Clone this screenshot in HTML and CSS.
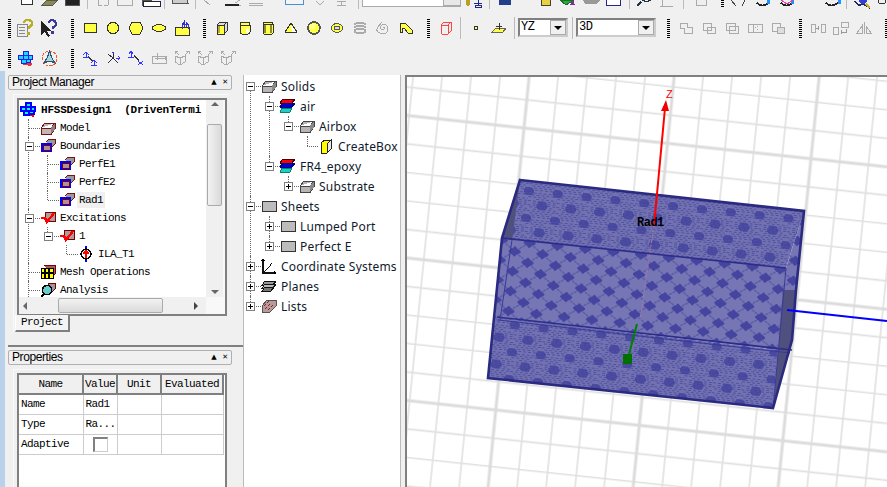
FILE: index.html
```html
<!DOCTYPE html>
<html lang="en">
<head>
    <meta charset="UTF-8">
    <meta name="viewport" content="width=device-width, initial-scale=1.0">
    <title>HFSS</title>
    <link rel="stylesheet" href="styles.css">
</head>
<body>

<!-- shared icons -->
<svg class="defs" width="0" height="0">
    <symbol id="i-solid" viewBox="0 0 16 16"><path d="M1 8h10v6H1zM1 8l4-5h10l-4 5v6l4-5V3" fill="#b8b4b4" stroke="#444"/><path d="M11 8l4-5v6l-4 5z" fill="#888"/></symbol>
    <symbol id="i-model" viewBox="0 0 16 16"><path d="M1 8h10v6H1zM1 8l4-5h10l-4 5v6l4-5V3" fill="#c0b8b8" stroke="#7a1010"/><path d="M11 8l4-5v6l-4 5z" fill="#8a8080"/></symbol>
    <symbol id="i-bound" viewBox="0 0 16 16"><path d="M6 4l3-3h6v5l-3 3" fill="#999" stroke="#7a1010"/><rect x="1" y="5" width="11" height="9" fill="#00f"/><rect x="3" y="7" width="7" height="5" fill="#b09090" stroke="#800000"/></symbol>
    <symbol id="i-exc" viewBox="0 0 16 16"><path d="M5 2h10v9H5z" fill="#b09a9a" stroke="#700"/><path d="M1 8h4l2 4 7-9" fill="none" stroke="#f00" stroke-width="2.4"/></symbol>
    <symbol id="i-port" viewBox="0 0 16 16"><path d="M8 0v16" stroke="#00f" stroke-width="2"/><circle cx="8" cy="8" r="5" fill="#fff" stroke="#000" stroke-width="1.4"/><path d="M8 12V6M5 8l3-3 3 3" stroke="#f00" stroke-width="2" fill="none"/></symbol>
    <symbol id="i-mesh" viewBox="0 0 16 16"><path d="M4 1h11v9l-3 3" fill="#a06060" stroke="#700"/><rect x="1" y="4" width="12" height="10" fill="#ff0" stroke="#000"/><path d="M1 9h12M5 4v10M9 4v10" stroke="#000" stroke-width="1.5"/></symbol>
    <symbol id="i-analysis" viewBox="0 0 16 16"><path d="M8 1h7v6l-4 4z" fill="#999" stroke="#700"/><circle cx="7" cy="8" r="4.5" fill="#6cc" stroke="#000" stroke-width="1.5"/><path d="M4 12l-3 3" stroke="#000" stroke-width="2"/></symbol>
    <symbol id="i-design" viewBox="0 0 16 16"><path d="M1 12l13 3 1-3z" fill="#f00"/><path d="M6 1h5v4H6zM1 5h5v4H1zM6 5h5v4H6zM11 5h4v4h-4zM4 9h5v4H4zM9 9h5v3H9z" fill="#0ff" stroke="#00f" stroke-width="1.2"/></symbol>
    <symbol id="i-mat" viewBox="0 0 16 16"><path d="M3 1h12l-3 4H0z" fill="#f00" stroke="#400"/><path d="M3 5h12l-3 4H0z" fill="#00c" stroke="#008"/><path d="M2 10h10l-2 4H0z" fill="#2cc" stroke="#086"/></symbol>
    <symbol id="i-createbox" viewBox="0 0 16 16"><path d="M3 5l4-3h6v9l-4 4H3z" fill="#ff0" stroke="#222"/><path d="M9 15V6l4-4v9z" fill="#e8e8e8" stroke="#222"/></symbol>
    <symbol id="i-sheet" viewBox="0 0 16 12"><rect x="1" y="1" width="14" height="10" fill="#bcbcbc" stroke="#333"/></symbol>
    <symbol id="i-coord" viewBox="0 0 16 16"><path d="M2 1v14h13M2 15l8-8" fill="none" stroke="#111" stroke-width="1.4"/><path d="M0 3l2-3 2 3zM13 13l3 2-3 2zM8 6l3-1-1 3z"/></symbol>
    <symbol id="i-plane" viewBox="0 0 16 16"><path d="M4 3h11l-3 4H1z" fill="#999" stroke="#111"/><path d="M4 6h11l-3 4H1z" fill="#bbb" stroke="#111"/><path d="M4 9h9l-3 4H1z" fill="#777" stroke="#111"/></symbol>
    <symbol id="i-list" viewBox="0 0 16 16"><path d="M1 8l5-6h9v6l-6 6H1z" fill="#b89a9a" stroke="#555"/><path d="M3 8l5-5M4 11l7-7M7 12l6-6" stroke="#822" stroke-dasharray="1 1"/></symbol>

    <symbol id="t-help" viewBox="0 0 18 18"><path d="M1 5h10v12H1z" fill="#eee" stroke="#888"/><path d="M3 8h6M3 11h6M3 14h6" stroke="#888"/><path d="M8 4q0-3 4-3t4 3-3 4v2" fill="none" stroke="#b8b020" stroke-width="2.4"/><rect x="11" y="13" width="3" height="3" fill="#b8b020"/></symbol>
    <symbol id="t-what" viewBox="0 0 18 18"><path d="M1 2v14l4-3 3 5 2-1-3-5h4z" fill="#222"/><path d="M9 4q0-3 3-3t4 3-3 4v2" fill="none" stroke="#3a3a9a" stroke-width="2.2"/><rect x="11" y="12" width="3" height="3" fill="#3a3a9a"/></symbol>
    <symbol id="t-rect" viewBox="0 0 14 12"><rect x="1" y="1" width="12" height="9" fill="#ff4" stroke="#333"/></symbol>
    <symbol id="t-circle" viewBox="0 0 14 14"><circle cx="7" cy="7" r="5.6" fill="#ff4" stroke="#333"/></symbol>
    <symbol id="t-hex" viewBox="0 0 16 14"><path d="M4 1h8l3 6-3 6H4L1 7z" fill="#ff4" stroke="#333"/></symbol>
    <symbol id="t-ellipse" viewBox="0 0 16 10"><ellipse cx="8" cy="5" rx="6.6" ry="3.4" fill="#ff4" stroke="#333"/></symbol>
    <symbol id="t-sketch" viewBox="0 0 16 16"><rect x="1" y="7" width="14" height="8" fill="#ff4" stroke="#333"/><path d="M8 9V5l2-3v5M12 7V2l2 2v5M8 4h6" fill="none" stroke="#33c"/></symbol>
    <symbol id="t-box" viewBox="0 0 12 14"><path d="M1 4l3-3h7v9l-3 3H1z" fill="#ddd" stroke="#333"/><path d="M1 4h7v9H1z" fill="#ff4" stroke="#333"/><path d="M8 4l3-3" stroke="#333"/><path d="M2 5h2v7H2z" fill="#b8a838"/></symbol>
    <symbol id="t-cyl" viewBox="0 0 12 14"><rect x="1" y="2" width="10" height="11" rx="2" fill="#ff4" stroke="#333"/><ellipse cx="6" cy="3" rx="5" ry="2" fill="#ff4" stroke="#333"/><path d="M7 8h3v4H7z" fill="#fff"/></symbol>
    <symbol id="t-prism" viewBox="0 0 12 14"><path d="M2 1h8l1 2v9l-1 1H2l-1-1V3z" fill="#ff4" stroke="#333"/><path d="M1 3h10" stroke="#333"/><path d="M2 4h2v8H2zM8 4h2v8H8z" fill="#8a8a30"/></symbol>
    <symbol id="t-cone" viewBox="0 0 14 12"><path d="M7 1l6 9q-6 2-12 0z" fill="#ff4" stroke="#333"/><path d="M7 4l3 3 2 3H8z" fill="#fff"/></symbol>
    <symbol id="t-sphere" viewBox="0 0 14 14"><circle cx="7" cy="7" r="6" fill="#ff4" stroke="#555" stroke-width="1.6"/><circle cx="5.5" cy="5.5" r="3" fill="#ffff90"/></symbol>
    <symbol id="t-torus" viewBox="0 0 14 12"><ellipse cx="7" cy="6" rx="5.8" ry="4.4" fill="#ff4" stroke="#555"/><ellipse cx="7" cy="6" rx="3" ry="1.8" fill="#ddd" stroke="#555"/></symbol>
    <symbol id="t-helix" viewBox="0 0 14 12"><path d="M1 2q6-2 12 0M1 5q6-2 12 0M1 8q6-2 12 0M1 10q6 2 12 0" fill="none" stroke="#aaa" stroke-width="2"/></symbol>
    <symbol id="t-spiral" viewBox="0 0 14 14"><path d="M7 7q2-1 1 1t-3 0 1-4 5 1 0 6-7 1-2-6 4-5" fill="none" stroke="#aaa"/></symbol>
    <symbol id="t-bent" viewBox="0 0 14 12"><path d="M1 1h5l7 7v3H9L5 6H3v4H1z" fill="#ff4" stroke="#333"/></symbol>
    <symbol id="t-wire" viewBox="0 0 12 14"><path d="M1 4l3-3h7v9l-3 3H2l-1-1zM1 4h7v9M8 4l3-3" fill="none" stroke="#f44"/></symbol>
    <symbol id="t-point" viewBox="0 0 6 6"><circle cx="3" cy="3" r="2" fill="#ff4" stroke="#333"/></symbol>
    <symbol id="t-plane" viewBox="0 0 16 12"><path d="M5 6h10l-3 4H1z" fill="#ff4" stroke="#665"/><path d="M8 1v7M5 4h6" stroke="#333"/></symbol>
    <symbol id="t-u1" viewBox="0 0 14 12"><path d="M1 1h7v4h5v6H5V6H1z" fill="none" stroke="#aaa"/></symbol>
    <symbol id="t-u2" viewBox="0 0 14 12"><path d="M1 1h8v7H1zM5 5h8v6H5z" fill="none" stroke="#aaa"/></symbol>
    <symbol id="t-u3" viewBox="0 0 14 12"><path d="M1 1h9v7H1zM4 4h9v7H4z" fill="none" stroke="#aaa"/></symbol>
    <symbol id="t-u4" viewBox="0 0 16 10"><path d="M1 1h14v8H1z" fill="none" stroke="#aaa"/><path d="M6 1v8M10 3v1M10 6v1M8 4h1" stroke="#aaa"/></symbol>
    <symbol id="t-u5" viewBox="0 0 14 12"><path d="M1 1h8v8H1z" fill="none" stroke="#aaa"/><path d="M6 5h7v6H6z" fill="#ddd" stroke="#aaa"/></symbol>
    <symbol id="t-m1" viewBox="0 0 16 10"><path d="M1 1h4v8H1zM11 1h4v8h-4z" fill="none" stroke="#aaa"/><path d="M6 5h3M8 3v4" stroke="#999"/></symbol>
    <symbol id="t-m2" viewBox="0 0 18 14"><path d="M1 6h5v7H1zM9 1h7v5H9z" fill="none" stroke="#aaa"/><path d="M14 8v3H9M9 9v4" fill="none" stroke="#999"/></symbol>
    <symbol id="t-m3" viewBox="0 0 16 12"><path d="M1 11l5-7v7zM15 11l-5-7v7zM8 0v12" fill="none" stroke="#aaa"/></symbol>
    <symbol id="t-design" viewBox="0 0 16 16"><path d="M2 13l11 2 2-3z" fill="#f03030"/><path d="M6 1h5v4H6zM1 5h5v4H1zM6 5h5v4H6zM11 5h4v4h-4zM4 9h5v4H4zM9 9h4v3H9z" fill="#18d8ff" stroke="#2020e0"/></symbol>
    <symbol id="t-plane3" viewBox="0 0 16 16"><circle cx="8" cy="8" r="7" fill="none" stroke="#e86030" stroke-dasharray="3 1"/><path d="M8 1l2 6 3 5-3-1H6l-3 1 3-5z" fill="#a8d8d8" stroke="#357"/></symbol>
    <symbol id="t-a1" viewBox="0 0 16 16"><path d="M6 7l5 4" stroke="#333" stroke-width="1.6"/><path d="M1 5l3-3 3 3M4 2v5M1 7h6M9 13l3-3 3 3M12 10v5M9 15h6" fill="none" stroke="#33f"/></symbol>
    <symbol id="t-a2" viewBox="0 0 14 14"><path d="M7 7V2M7 7l5 5M7 7l-5 5M2 3l5 4" stroke="#333"/><path d="M10 7h4M12 5l2 2-2 2M6 1h2" fill="none" stroke="#33f"/></symbol>
    <symbol id="t-a3" viewBox="0 0 16 16"><path d="M6 6l5 4" stroke="#333" stroke-width="1.6"/><path d="M1 4l2-3 2 3M3 1v6M0 7h6M10 11l5 4M10 15l5-4" fill="none" stroke="#33f"/></symbol>
    <symbol id="t-a4" viewBox="0 0 16 12"><path d="M1 4h14v7H1zM6 1v7M4 6h10M14 4v4" fill="none" stroke="#aaa"/></symbol>
    <symbol id="t-a5" viewBox="0 0 16 16"><path d="M1 6l5 2 5-2v6l-5 3-5-3zM6 8v6M1 1l4 4M1 1h3M1 1v3M11 5l4-4M15 1h-3M15 1v3" fill="none" stroke="#aaa"/></symbol>
</svg>

<div class="toolbars">
    <!-- top row is cut off by the window edge, only the feet of the icons show -->
    <svg class="strip" viewBox="0 0 887 11" width="887" height="11">
        <g fill="none" stroke="#555">
            <path d="M21 0v4h11V0" stroke="#333" fill="#fff"/>
            <path d="M42 5l5-5h11l-5 5z" fill="#8a8a50"/>
            <path d="M65 0v5h14V0" fill="#222"/>
            <path d="M142 0v5h9V0" fill="#57502a"/>
            <path d="M172 0v3h16l-1-3" fill="#ccc"/>
            <path d="M98 5h4M104 5h4M98 0v5M108 0v5M117 0v5h15V0M204 0l6 5M225 5h16M240 0l-5 3M249 3h14M249 5h14M293 0v4M300 0v3h3M316 1l4 4 4-4M337 1h9M341 1v4M337 5h9" stroke="#aaa"/>
            <rect x="285" y="-4" width="18" height="8" stroke="#4a90d8" fill="#f4f4f4"/>
            <path d="M225 5h14" stroke="#222" stroke-width="2"/>
        </g>
        <rect x="143" y="1" width="17" height="5" fill="#fff" stroke="#224"/>
        <path d="M87 0v9M164 0v9M195 0v9M358 0v9M489 0v9M629 0v9M683 0v9M846 0v9" stroke="#bbb"/>
        <rect x="362" y="-6" width="98" height="12" fill="#fff" stroke="#aaa"/>
        <rect x="443" y="-4" width="17" height="9" fill="#e8e8e8" stroke="#aaa"/>
        <path d="M466 0h4v4l-2 3-2-3z" fill="#b8a020"/>
        <path d="M474 3h8M478 0v5M475 5h6v2h-6z" fill="none" stroke="#22278a"/>
        <rect x="499" y="-2" width="12" height="7" fill="#24408a"/>
        <rect x="541" y="-2" width="9" height="7" fill="#e8d040" stroke="#443"/>
        <path d="M560 0l6 5 8-5z" fill="#22b030" stroke="#263"/>
        <path d="M573 0l-3 5h5z" fill="#882a9a"/>
        <path d="M583 0h17l-3 4h-12z" fill="#999"/>
        <rect x="606" y="-2" width="14" height="7" fill="#fff" stroke="#23258a"/>
        <path d="M637 6l4-4M642 0q6 3 8 0" fill="none" stroke="#234" stroke-width="1.5"/>
        <path d="M660 6h13M662 0v6" stroke="#aaa"/>
        <path d="M696 0v5h10V0" stroke="#aaa" fill="#eee"/>
        <path d="M722 0v7" stroke="#000" stroke-width="3" stroke-dasharray="1 1"/>
        <path d="M731 0l5 6M745 0l-3 6" stroke="#444"/>
        <path d="M757 3q5 5 12 0M781 3q5 5 12 0M826 3q5 5 12 0" fill="none" stroke="#222" stroke-width="1.6"/>
        <path d="M767 0h3v4h-3zM791 0h3v4h-3zM838 0h3v4h-3z" fill="#1e90ff"/>
        <path d="M781 0l6 4 6-4" fill="none" stroke="#e040a0"/>
        <path d="M855 1q3 6 8 3l7 4" fill="none" stroke="#226" stroke-width="1.5"/>
        <path d="M866 4l4 4" stroke="#c8b020" stroke-width="2"/>
        <circle cx="863" cy="0" r="4" fill="#3040d0"/>
        <circle cx="882" cy="0" r="4" fill="none" stroke="#333"/>
    </svg>

    <div class="tb-row tall">
        <span class="grip first"></span>
        <span class="slot wide"><svg width="18" height="18"><use href="#t-help"/></svg></span>
        <span class="slot wide"><svg width="18" height="18"><use href="#t-what"/></svg></span>
        <span class="grip"></span>
        <span class="slot start"><svg width="14" height="12"><use href="#t-rect"/></svg></span>
        <span class="slot"><svg width="14" height="14"><use href="#t-circle"/></svg></span>
        <span class="slot"><svg width="16" height="14"><use href="#t-hex"/></svg></span>
        <span class="slot"><svg width="16" height="10"><use href="#t-ellipse"/></svg></span>
        <span class="slot"><svg width="16" height="16"><use href="#t-sketch"/></svg></span>
        <span class="grip"></span>
        <span class="slot start"><svg width="12" height="14"><use href="#t-box"/></svg></span>
        <span class="slot"><svg width="12" height="14"><use href="#t-cyl"/></svg></span>
        <span class="slot"><svg width="12" height="14"><use href="#t-prism"/></svg></span>
        <span class="slot"><svg width="14" height="12"><use href="#t-cone"/></svg></span>
        <span class="slot"><svg width="14" height="14"><use href="#t-sphere"/></svg></span>
        <span class="slot"><svg width="14" height="12"><use href="#t-torus"/></svg></span>
        <span class="slot"><svg width="14" height="12"><use href="#t-helix"/></svg></span>
        <span class="slot"><svg width="14" height="14"><use href="#t-spiral"/></svg></span>
        <span class="slot"><svg width="14" height="12"><use href="#t-bent"/></svg></span>
        <span class="grip"></span>
        <span class="slot start"><svg width="12" height="14"><use href="#t-wire"/></svg></span>
        <span class="sep"></span>
        <span class="slot"><svg width="6" height="6"><use href="#t-point"/></svg></span>
        <span class="slot"><svg width="16" height="12"><use href="#t-plane"/></svg></span>
        <span class="sep sep-b"></span>
        <span class="combo plane"><span class="combo-text">YZ</span><span class="combo-btn"></span></span>
        <span class="sep sep-c"></span>
        <span class="combo view"><span class="combo-text">3D</span><span class="combo-btn"></span></span>
        <span class="grip grip-d"></span>
        <span class="slot start"><svg width="14" height="12"><use href="#t-u1"/></svg></span>
        <span class="slot"><svg width="14" height="12"><use href="#t-u2"/></svg></span>
        <span class="slot"><svg width="14" height="12"><use href="#t-u3"/></svg></span>
        <span class="slot"><svg width="16" height="10"><use href="#t-u4"/></svg></span>
        <span class="slot"><svg width="14" height="12"><use href="#t-u5"/></svg></span>
        <span class="grip"></span>
        <span class="slot start"><svg width="16" height="10"><use href="#t-m1"/></svg></span>
        <span class="slot"><svg width="18" height="14"><use href="#t-m2"/></svg></span>
        <span class="slot"><svg width="16" height="12"><use href="#t-m3"/></svg></span>
        <span class="grip"></span>
    </div>

    <div class="tb-row">
        <span class="grip first"></span>
        <span class="slot wide"><svg width="17" height="17"><use href="#t-design"/></svg></span>
        <span class="slot wide"><svg width="17" height="17"><use href="#t-plane3"/></svg></span>
        <span class="grip"></span>
        <span class="slot start"><svg width="16" height="16"><use href="#t-a1"/></svg></span>
        <span class="slot"><svg width="14" height="14"><use href="#t-a2"/></svg></span>
        <span class="slot"><svg width="16" height="16"><use href="#t-a3"/></svg></span>
        <span class="slot"><svg width="16" height="12"><use href="#t-a4"/></svg></span>
        <span class="slot"><svg width="16" height="16"><use href="#t-a5"/></svg></span>
        <span class="slot"><svg width="16" height="16"><use href="#t-a5"/></svg></span>
        <span class="slot"><svg width="16" height="16"><use href="#t-a5"/></svg></span>
    </div>
</div>

<div class="workspace">
    <aside class="sidebar">
        <section class="panel project">
            <div class="panel-title"><span>Project Manager</span><span class="title-btns">&#9650; &#10005;</span></div>
            <div class="panel-body">
                <div class="frame tree-frame">
                    <div class="tree-view">
                        <div class="design-row"><svg width="16" height="16"><use href="#i-design"/></svg><b>HFSSDesign1  (DrivenTermi</b></div>
                        <ul class="tree small">
                            <li><div class="node"><span class="tg"></span><svg width="16" height="16"><use href="#i-model"/></svg>Model</div></li>
                            <li><div class="node"><span class="tg"><i class="box minus"></i></span><svg width="16" height="16"><use href="#i-bound"/></svg>Boundaries</div>
                                <ul>
                                    <li><div class="node"><span class="tg"></span><svg width="16" height="16"><use href="#i-bound"/></svg>PerfE1</div></li>
                                    <li><div class="node"><span class="tg"></span><svg width="16" height="16"><use href="#i-bound"/></svg>PerfE2</div></li>
                                    <li><div class="node"><span class="tg"></span><svg width="16" height="16"><use href="#i-bound"/></svg><span class="picked">Rad1</span></div></li>
                                </ul>
                            </li>
                            <li><div class="node"><span class="tg"><i class="box minus"></i></span><svg width="16" height="16"><use href="#i-exc"/></svg>Excitations</div>
                                <ul>
                                    <li><div class="node"><span class="tg"><i class="box minus"></i></span><svg width="16" height="16"><use href="#i-exc"/></svg>1</div>
                                        <ul>
                                            <li><div class="node"><span class="tg"></span><svg width="16" height="16"><use href="#i-port"/></svg>ILA_T1</div></li>
                                        </ul>
                                    </li>
                                </ul>
                            </li>
                            <li><div class="node"><span class="tg"></span><svg width="16" height="16"><use href="#i-mesh"/></svg>Mesh Operations</div></li>
                            <li class="cont"><div class="node"><span class="tg"></span><svg width="16" height="16"><use href="#i-analysis"/></svg>Analysis</div></li>
                        </ul>
                    </div>
                    <div class="vscroll">
                        <span class="arrow up"></span>
                        <span class="thumb-v"></span>
                        <span class="arrow down"></span>
                    </div>
                    <div class="hscroll">
                        <span class="arrow left"></span>
                        <span class="thumb-h"></span>
                        <span class="arrow right"></span>
                    </div>
                </div>
                <div class="tab">Project</div>
            </div>
        </section>

        <section class="panel props">
            <div class="panel-title"><span>Properties</span><span class="title-btns">&#9650; &#10005;</span></div>
            <div class="panel-body">
                <div class="frame table-frame">
                    <table class="prop-table">
                        <thead>
                            <tr><th class="c1">Name</th><th class="c2">Value</th><th class="c3">Unit</th><th class="c4">Evaluated</th></tr>
                        </thead>
                        <tbody>
                            <tr><td>Name</td><td>Rad1</td><td></td><td></td></tr>
                            <tr><td>Type</td><td>Ra...</td><td></td><td></td></tr>
                            <tr><td>Adaptive</td><td class="center"><span class="check"></span></td><td></td><td></td></tr>
                        </tbody>
                    </table>
                </div>
            </div>
        </section>
    </aside>

    <div class="model-tree">
        <ul class="tree large">
            <li><div class="node"><span class="tg"><i class="box minus"></i></span><svg width="16" height="16"><use href="#i-solid"/></svg>Solids</div>
                <ul>
                    <li><div class="node"><span class="tg"><i class="box minus"></i></span><svg width="16" height="16"><use href="#i-mat"/></svg>air</div>
                        <ul>
                            <li><div class="node"><span class="tg"><i class="box minus"></i></span><svg width="16" height="16"><use href="#i-solid"/></svg>Airbox</div>
                                <ul>
                                    <li><div class="node"><span class="tg"></span><svg width="16" height="16"><use href="#i-createbox"/></svg>CreateBox</div></li>
                                </ul>
                            </li>
                        </ul>
                    </li>
                    <li><div class="node"><span class="tg"><i class="box minus"></i></span><svg width="16" height="16"><use href="#i-mat"/></svg>FR4_epoxy</div>
                        <ul>
                            <li><div class="node"><span class="tg"><i class="box plus"></i></span><svg width="16" height="16"><use href="#i-solid"/></svg>Substrate</div></li>
                        </ul>
                    </li>
                </ul>
            </li>
            <li><div class="node"><span class="tg"><i class="box minus"></i></span><svg width="16" height="12"><use href="#i-sheet"/></svg>Sheets</div>
                <ul>
                    <li><div class="node"><span class="tg"><i class="box plus"></i></span><svg width="16" height="12"><use href="#i-sheet"/></svg>Lumped Port</div></li>
                    <li><div class="node"><span class="tg"><i class="box plus"></i></span><svg width="16" height="12"><use href="#i-sheet"/></svg>Perfect E</div></li>
                </ul>
            </li>
            <li><div class="node"><span class="tg"><i class="box plus"></i></span><svg width="16" height="16"><use href="#i-coord"/></svg>Coordinate Systems</div></li>
            <li><div class="node"><span class="tg"><i class="box plus"></i></span><svg width="16" height="16"><use href="#i-plane"/></svg>Planes</div></li>
            <li><div class="node"><span class="tg"><i class="box plus"></i></span><svg width="16" height="16"><use href="#i-list"/></svg>Lists</div></li>
        </ul>
    </div>

    <div class="viewport">
        <svg class="scene" viewBox="407 77 480 410" width="480" height="410">
            <defs>
                <pattern id="grid" patternUnits="userSpaceOnUse" width="143.5" height="141" patternTransform="matrix(1 0.107 -0.1 1 524 128)">
                    <path d="M0 0V141M28.7 0V141M57.4 0V141M86.1 0V141M114.8 0V141M0 0H143.5M0 28.2H143.5M0 56.4H143.5M0 84.6H143.5M0 112.8H143.5" stroke="#e0e0e0" stroke-width="1.6" fill="none"/>
                    <path d="M0 0V141M143.5 0V141M0 0H143.5M0 141H143.5" stroke="#dcdcdc" stroke-width="3" fill="none"/>
                </pattern>
                <pattern id="mesh-flat" patternUnits="userSpaceOnUse" width="29" height="27" patternTransform="rotate(6 520 180) translate(530 190)">
                    <g class="pix">
                        <rect width="29" height="27" fill="#7272b2"/>
                        <ellipse cx="0" cy="0" rx="5.5" ry="4.5" fill="#4747a0"/><ellipse cx="29" cy="0" rx="5.5" ry="4.5" fill="#4747a0"/>
                        <ellipse cx="0" cy="27" rx="5.5" ry="4.5" fill="#4747a0"/><ellipse cx="29" cy="27" rx="5.5" ry="4.5" fill="#4747a0"/>
                        <ellipse cx="14.5" cy="13.5" rx="5.5" ry="4.5" fill="#4747a0"/>
                        <path d="M0 1.5h29M3 3.5h26M0 5.5h20M8 7.5h21M0 9.5h29M5 11.5h24M0 13.5h29M2 15.5h24M6 17.5h23M0 19.5h29M3 21.5h22M0 23.5h29M6 25.5h23" stroke="#50509f" stroke-dasharray="3 2"/>
                    </g>
                </pattern>
                <pattern id="mesh-cross" patternUnits="userSpaceOnUse" width="28" height="20" patternTransform="rotate(6 502 238) translate(502 240)">
                    <g class="pix">
                        <rect width="28" height="20" fill="#7676b4"/>
                        <path d="M0 0l28 20M28 0L0 20M14-10l28 20M-14 10l28 20M14 30l28-20M-14 10L14-10" stroke="#5a5aa6"/>
                        <path d="M0-5l7 5-7 5-7-5zM28-5l7 5-7 5-7-5zM0 15l7 5-7 5-7-5zM28 15l7 5-7 5-7-5zM14 5l7 5-7 5-7-5z" fill="#4545a0"/>
                    </g>
                </pattern>
            </defs>
            <rect x="407" y="77" width="480" height="410" fill="#fff"/>
            <rect x="407" y="77" width="480" height="410" fill="url(#grid)"/>

            <polygon points="520,180 804,211 786,268 502,238" fill="url(#mesh-flat)"/>
            <polygon points="502,238 786,268 778,350 495,317" fill="url(#mesh-cross)"/>
            <polygon points="495,317 778,350 773,408 488,378" fill="url(#mesh-flat)"/>
            <polygon points="804,211 796,290 783,290 786,268" fill="url(#mesh-cross)"/>
            <polygon points="796,290 792,340 773,408 783,290" fill="#50507f"/>
            <polygon points="520,180 502,238 512,240" fill="#50507f"/>

            <path d="M502 238L786 268M497 317L792 350" stroke="#2c2c8c" stroke-width="1.6" fill="none"/>
            <path d="M498 320L790 353M512 240L500 320M786 268L773 408" stroke="#3a3a98" fill="none"/>
            <polygon points="520,180 804,211 796,290 792,340 773,408 488,378 502,238" fill="none" stroke="#2a2a80" stroke-width="2.6"/>

            <path d="M654 225L640 320" stroke="#a878a8" stroke-width="1" stroke-dasharray="3 2"/>
            <path d="M665 108L654 226" stroke="#f00" stroke-width="2"/>
            <path d="M666 100L669 111H661z" fill="#e00"/>
            <text class="axis-z" x="666" y="98">Z</text>
            <path d="M637 324L628 358" stroke="#008000" stroke-width="2"/>
            <rect x="623" y="354" width="9" height="10" fill="#007000"/>
            <path d="M787 310L887 321" stroke="#00f" stroke-width="2"/>
            <text class="label" x="637" y="226">Rad1</text>
        </svg>
    </div>
</div>

</body>
</html>
```

FILE: styles.css
```css
* {
    box-sizing: border-box;
}
html, body {
    margin: 0;
    padding: 0;
}
body {
    width: 887px;
    height: 487px;
    overflow: hidden;
    background-color: #f0f0f0;
    font-family: "Noto Sans", sans-serif;
    font-size: 12px;
    color: #000;
}
.defs {
    display: block;
    height: 0;
}
svg {
    shape-rendering: crispEdges;
}

/* toolbars */
.toolbars {
    height: 71px;
}
.strip {
    display: block;
}
.tb-row {
    display: flex;
    align-items: center;
    height: 26px;
}
.tb-row.tall {
    height: 34px;
}
.grip {
    flex: none;
    width: 3px;
    height: 19px;
    margin-left: 10px;
    background: repeating-linear-gradient(#000 0 1px, transparent 1px 2px);
}
.grip.first {
    margin-left: 8px;
    margin-right: 2px;
}
.grip-d {
    margin-left: 11px;
}
.slot {
    flex: none;
    width: 23px;
    display: flex;
    justify-content: center;
    align-items: center;
}
.slot.wide {
    width: 24px;
}
.slot.start {
    margin-left: 4px;
}
.sep {
    flex: none;
    width: 1px;
    height: 22px;
    margin: 0 3px;
    background-color: #bbb;
}
.sep-b {
    margin: 0 3px 0 4px;
}
.sep-c {
    margin: 0 3px 0 4px;
}
.combo {
    flex: none;
    display: flex;
    align-items: center;
    justify-content: space-between;
    height: 19px;
    background-color: #fff;
    border: 2px solid #808080;
    border-right-color: #ccc;
    border-bottom-color: #ccc;
    font-family: "Liberation Mono", monospace;
    font-size: 12px;
    margin-top: -2px;
}
.combo.plane {
    width: 50px;
}
.combo.view {
    width: 80px;
}
.combo-text {
    padding-left: 1px;
    letter-spacing: -0.4px;
}
.combo-btn {
    width: 16px;
    height: 15px;
    background-color: #f0f0f0;
    border: 1px solid #aaa;
    position: relative;
}
.combo-btn::after {
    content: "";
    position: absolute;
    left: 3px;
    top: 5px;
    border: 4px solid transparent;
    border-top: 4px solid #000;
    border-bottom: 0;
}

/* main area */
.workspace {
    display: flex;
    height: 416px;
    background-image: linear-gradient(#b9d1ea, #b9d1ea);
    background-size: 5px 100%;
    background-repeat: no-repeat;
}
.sidebar {
    flex: none;
    width: 243px;
    padding: 4px 0 0 8px;
}
.panel-title {
    display: flex;
    justify-content: space-between;
    align-items: center;
    width: 224px;
    height: 15px;
    padding: 0 3px;
    border: 1px solid #b0b0b0;
    border-radius: 2px;
    font-family: "Liberation Sans", sans-serif;
    letter-spacing: -0.4px;
    line-height: 13px;
}
.title-btns {
    font-size: 7px;
    font-family: "DejaVu Sans", sans-serif;
    font-weight: bold;
    word-spacing: 3px;
    letter-spacing: 0;
}
.panel-body {
    margin: 4px 0 0 5px;
    padding: 3px 0 0 3px;
    width: 216px;
    border-top: 1px solid #fafafa;
    border-left: 1px solid #fafafa;
}
.frame {
    width: 210px;
    border: 2px solid #808080;
    background-color: #f8f8f8;
}

/* project tree panel */
.project {
    height: 270px;
}
.tree-frame {
    display: grid;
    grid-template-columns: 187px 17px;
    grid-template-rows: 197px 17px;
    height: 218px;
}
.tree-view {
    overflow: hidden;
    background-color: #fff;
    font-family: "Liberation Mono", monospace;
    font-size: 11px;
    letter-spacing: -0.6px;
}
.design-row {
    display: flex;
    align-items: center;
    gap: 5px;
    height: 18px;
    margin-top: 1px;
    padding-left: 1px;
    white-space: pre;
}
.design-row b {
    letter-spacing: -0.2px;
}

.tree, .tree ul {
    list-style: none;
    margin: 0;
    padding: 0;
}
.tree ul {
    margin-left: 19px;
}
.tree li {
    position: relative;
}
/* dotted joint lines */
.tree li::before {
    content: "";
    position: absolute;
    left: 9px;
    top: 0;
    bottom: 0;
    border-left: 1px dotted #666;
}
.tree li:last-child::before {
    bottom: auto;
    height: 50%;
    max-height: 9px;
}
.tree li.cont:last-child::before {
    height: auto;
    max-height: none;
    bottom: 0;
}
.tree .node {
    position: relative;
    display: flex;
    align-items: center;
    height: 18px;
    padding-left: 6px;
    white-space: nowrap;
}
.tree .node svg {
    flex: none;
    margin-right: 4px;
}
.tg {
    flex: none;
    display: flex;
    align-items: center;
    width: 15px;
    height: 100%;
    background: repeating-linear-gradient(90deg, #666 0 1px, transparent 1px 2px) 4px 50% / 11px 1px no-repeat;
}
.box {
    position: relative;
    width: 9px;
    height: 9px;
    border: 1px solid #808080;
    background-color: #fff;
}
.box::before {
    content: "";
    position: absolute;
    left: 1px;
    top: 3px;
    width: 5px;
    height: 1px;
    background-color: #000;
}
.box.plus::after {
    content: "";
    position: absolute;
    left: 3px;
    top: 1px;
    width: 1px;
    height: 5px;
    background-color: #000;
}
.picked {
    background-color: #f0f0f0;
    margin-left: -2px;
    padding: 2px 2px;
}

.vscroll {
    display: flex;
    flex-direction: column;
    align-items: center;
    background-color: #f0f0f0;
}
.thumb-v {
    width: 15px;
    height: 82px;
    margin-top: 18px;
    border: 1px solid #aaa;
    border-radius: 2px;
    background: linear-gradient(90deg, #f2f2f2, #dadada);
}
.hscroll {
    display: flex;
    align-items: center;
    background-color: #f0f0f0;
    padding-left: 0;
}
.thumb-h {
    width: 105px;
    height: 15px;
    margin-left: 31px;
    border: 1px solid #aaa;
    border-radius: 2px;
    background: linear-gradient(#f2f2f2, #dadada);
}
.arrow {
    flex: none;
    display: block;
    width: 0;
    height: 0;
    border: 4px solid transparent;
}
.arrow.up {
    margin-top: 2px;
    border-bottom: 4px solid #666;
    border-top: 0;
}
.arrow.down {
    margin-top: auto;
    margin-bottom: 3px;
    border-top: 4px solid #666;
    border-bottom: 0;
}
.arrow.left {
    margin-left: 4px;
    border-right: 4px solid #666;
    border-left: 0;
}
.arrow.right {
    margin-left: 31px;
    border-left: 4px solid #444;
    border-right: 0;
}
.tab {
    width: 55px;
    height: 17px;
    margin: -1px 0 0 -2px;
    padding-left: 5px;
    background-color: #f4f4f4;
    border-right: 2px solid #808080;
    border-bottom: 2px solid #808080;
    border-left: 1px solid #fff;
    font-family: "Liberation Mono", monospace;
    font-size: 11px;
    letter-spacing: -0.6px;
    line-height: 15px;
}

/* model tree in the middle */
.model-tree {
    flex: none;
    width: 158px;
    height: 416px;
    margin-top: 4px;
    background-color: #fff;
    border-left: 1px solid #bbb;
    border-right: 1px solid #bbb;
    font-size: 12px;
    letter-spacing: 0.2px;
    color: #0f1a2c;
    overflow: hidden;
}
.tree.large {
    margin-top: 1px;
}
.tree.large li::before {
    left: 6px;
}
.tree.large .node {
    height: 20px;
    padding-left: 2px;
}
.tree.large > li:first-child::before {
    top: 10px;
}
.tree.large li:last-child::before {
    max-height: 10px;
}

/* properties */
.props {
    margin-top: 0;
    padding-top: 3px;
    border-top: 2px solid #808080;
}
.table-frame {
    height: 120px;
    background-color: #fff;
    border-bottom: 0;
    position: relative;
}
.prop-table {
    border-collapse: collapse;
    table-layout: fixed;
    width: 204px;
    font-family: "Liberation Mono", monospace;
    font-size: 11px;
    letter-spacing: -0.6px;
}
.prop-table th {
    height: 19px;
    padding: 0;
    font-weight: normal;
    background-color: #f0f0f0;
    border-right: 2px solid #808080;
    border-bottom: 2px solid #808080;
}
.prop-table td {
    height: 20px;
    padding: 0 2px;
    border-right: 1px solid #ccc;
    border-bottom: 1px solid #ccc;
}
.c1 { width: 64px; }
.c2 { width: 34px; }
.c3 { width: 44px; }
.c4 { width: 62px; }
.center {
    text-align: center;
}
.check {
    display: block;
    width: 15px;
    height: 15px;
    margin: 0 auto;
    background-color: #fff;
    border: 2px solid #808080;
    border-right: 1px solid #ccc;
    border-bottom: 1px solid #ccc;
}

/* 3d view */
.viewport {
    flex: none;
    width: 482px;
    height: 412px;
    margin: 4px 0 0 4px;
    border-top: 2px solid #808080;
    border-left: 2px solid #808080;
    overflow: hidden;
}
.scene {
    display: block;
    shape-rendering: auto;
}
.pix {
    shape-rendering: crispEdges;
}
.label {
    font-family: "Liberation Mono", monospace;
    font-size: 12px;
    font-weight: bold;
    letter-spacing: -0.5px;
}
.axis-z {
    font-family: "Liberation Sans", sans-serif;
    font-size: 11px;
    fill: #f00;
}
```
